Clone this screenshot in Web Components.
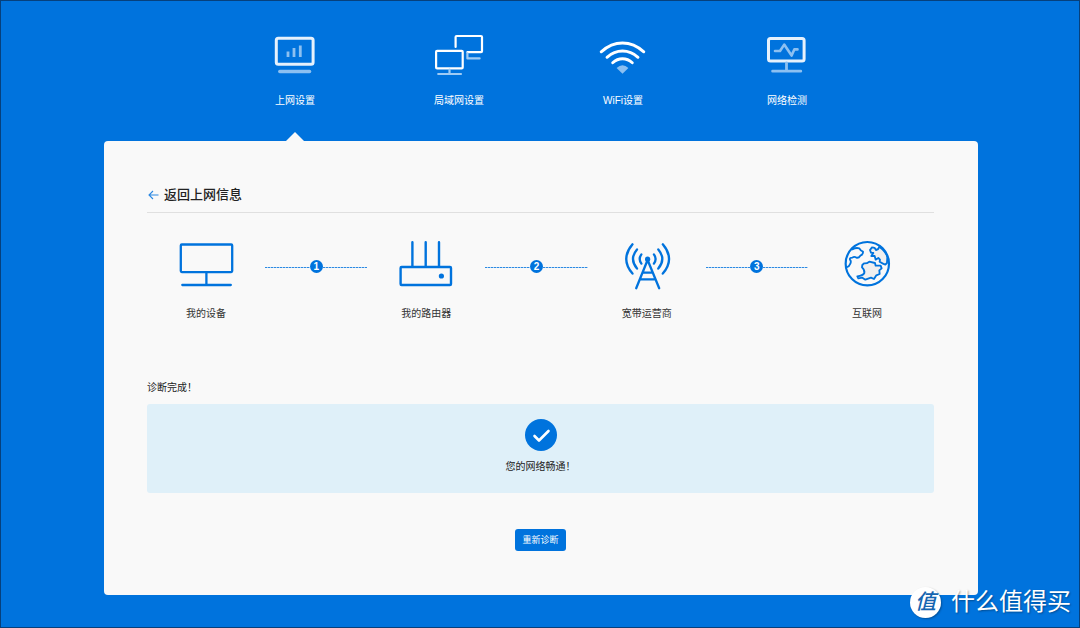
<!DOCTYPE html>
<html lang="zh-CN">
<head>
<meta charset="utf-8">
<meta name="viewport" content="width=device-width, initial-scale=1">
<title>上网设置</title>
<style>
  :root { --blue: #0073dd; --panel: #f9f9f9; --tint: #dff0f9; --ink: #333; }
  body { margin: 0; font: 10px/16px "Liberation Sans", "Noto Sans CJK SC", sans-serif; color: var(--ink); }
</style>
</head>
<body>
<router-page>
  <nav-tab slot="tab" icon="internet" active>上网设置</nav-tab>
  <nav-tab slot="tab" icon="lan">局域网设置</nav-tab>
  <nav-tab slot="tab" icon="wifi">WiFi设置</nav-tab>
  <nav-tab slot="tab" icon="check">网络检测</nav-tab>

  <back-title>返回上网信息</back-title>
  <diagnose-path>
    <path-node icon="device">我的设备</path-node>
    <path-link>1</path-link>
    <path-node icon="router">我的路由器</path-node>
    <path-link>2</path-link>
    <path-node icon="tower">宽带运营商</path-node>
    <path-link>3</path-link>
    <path-node icon="globe">互联网</path-node>
  </diagnose-path>
  <diagnose-result>
    <span slot="status">诊断完成！</span>
    您的网络畅通！
  </diagnose-result>
  <action-button>重新诊断</action-button>

  <site-mark slot="mark">什么值得买</site-mark>
</router-page>

<script>
const ICONS = {
  internet: `<svg viewBox="265 32 60 48" fill="none" stroke="#e6f1fc" stroke-width="3" stroke-linecap="round">
    <rect x="276.3" y="38.3" width="36.8" height="26" rx="2"/>
    <path d="M279.8 71.5H309.6" stroke="#8cc0f1" stroke-width="3.4"/>
    <path d="M288 51.5V57M294 48V57M300.3 45.5V57" stroke="#8cc0f1" stroke-width="2.8" stroke-linecap="butt"/></svg>`,
  lan: `<svg viewBox="429 32 60 48" fill="none" stroke="#fff" stroke-width="2.2" stroke-linecap="round" stroke-linejoin="round">
    <rect x="436.1" y="50.8" width="26.6" height="17.6" rx="1"/>
    <path d="M455.6 47V37q0-1 1-1H481q1 0 1 1V51.2q0 1-1 1H467.4"/>
    <path d="M467.4 53.4V58.4H479.6M449.5 69.6V73.5M438.2 74H461" stroke="#9fcbf4"/></svg>`,
  wifi: `<svg viewBox="593 32 60 48" fill="none" stroke="#fff" stroke-width="2.9" stroke-linecap="round">
    <path d="M601.2 51.8Q611 43 622.5 43T643.8 51.8M607 57.3Q614 51 622.5 51T638 57.3M612.7 62.8Q617 58.8 622.5 58.8T632.3 62.8"/>
    <path d="M616.6 68Q622.5 62.6 628.4 68L622.5 73.8Z" fill="#8cc0f1" stroke="none"/></svg>`,
  check: `<svg viewBox="757 32 60 48" fill="none" stroke="#e6f1fc" stroke-width="3" stroke-linecap="round" stroke-linejoin="round">
    <rect x="768.5" y="38.5" width="35.6" height="22.6" rx="2"/>
    <path d="M775 51H780L784.2 44.6L791.6 55.6L794.3 49.4H797.5" stroke="#8cc0f1" stroke-width="2.6"/>
    <path d="M786.5 63V70M772.6 71.2H800.8" stroke="#8cc0f1" stroke-width="2.8"/></svg>`,
  device: `<svg viewBox="176 239 60 52" fill="none" stroke="#0073dd" stroke-width="2.3" stroke-linecap="round">
    <rect x="180.8" y="244.5" width="51.4" height="27.6" rx="1"/><path d="M206.4 273V285M182.3 285H230.8"/></svg>`,
  router: `<svg viewBox="397 239 60 52" fill="none" stroke="#0073dd" stroke-width="2.4" stroke-linecap="round">
    <rect x="401.6" y="267" width="50.4" height="18" rx="1"/><path d="M413.4 242.3V266M426.7 242.3V266M440 242.3V266"/>
    <circle cx="442.4" cy="276" r="2.6" fill="#0073dd" stroke="none"/></svg>`,
  tower: `<svg viewBox="617 239 60 52" fill="none" stroke="#0073dd" stroke-width="2.3" stroke-linecap="round">
    <circle cx="647.6" cy="259.2" r="2.6" fill="#0073dd" stroke="none"/>
    <path d="M647.6 260L636.2 288.3M647.6 260L659.2 288.3M643 272.7H652.5M640 279.3H655.2"/>
    <path d="M632.5 244.3Q620 259 632.5 273.6M637 249.4Q629 259 637 268.6M641.4 254.4Q638 259 641.4 263.6"/>
    <path d="M662.8 244.3Q675.3 259 662.8 273.6M658.3 249.4Q666.3 259 658.3 268.6M653.9 254.4Q657.3 259 653.9 263.6"/></svg>`,
  globe: `<svg viewBox="837 239 60 52"><g transform="translate(760 225) scale(.3333)" fill="none" stroke="#0073dd" stroke-width="6.5" stroke-linecap="round" stroke-linejoin="round">
    <path d="M277 73Q288 67 298 70Q302 78 309 80Q310 89 301 92Q296 100 289 98Q283 93 277 98Q268 98 270 104Q275 110 270 118Q268 124 262 126" stroke-width="5.5"/>
    <path d="M358 65Q356 73 348 75Q346 67 336 67L330 75L333 83L340 84L334 93L344 93L347 104L355 99L360 104L359 110Q370 117 376 119L381 114L382 96Q378 80 358 65Z" fill="#efefef" stroke-width="5.5"/>
    <path d="M312 115Q320 116 328 110L345 114L347 122L362 122L365 130L358 136L359 147L349 151L342 162L333 158L316 164L307 158L295 160L292 154Q309 152 313 144Q315 135 306 127L307 120Z" fill="#efefef" stroke-width="5.5"/>
    <circle cx="322" cy="116" r="65"/></g></svg>`
};

function define(name, html, setup) {
  const template = document.createElement('template');
  template.innerHTML = html;
  customElements.define(name, class extends HTMLElement {
    constructor() {
      super();
      this.attachShadow({ mode: 'open' }).append(template.content.cloneNode(true));
    }
    connectedCallback() { if (setup) setup(this, this.shadowRoot); }
  });
}
const putIcon = (host, root) => {
  root.querySelector('.icon').innerHTML = ICONS[host.getAttribute('icon')];
};

define('router-page', `
  <style>
    :host { display: flex; flex-direction: column; position: relative; box-sizing: border-box; min-height: 100vh;
      padding: 0 32px 32px; background: var(--blue); border: 1px solid #06407c; }
    nav { display: flex; justify-content: center; padding: 31px 0 0 2px; }
    main { box-sizing: border-box; width: 100%; max-width: 874px; margin: 0 auto; flex: 1;
      padding: 44px 44px 40px 43px; background: var(--panel); border-radius: 4px; }
    .center { padding-left: 2px; display: flex; flex: 1; }
  </style>
  <nav aria-label="设置"><slot name="tab"></slot></nav>
  <div class="center"><main><slot></slot></main></div>
  <slot name="mark"></slot>`);

define('nav-tab', `
  <style>
    :host { display: block; flex: 0 1 164px; height: 109px; }
    a { display: flex; flex-direction: column; align-items: center; height: 100%; color: #fff; text-decoration: none; white-space: nowrap; }
    .icon { display: block; height: 48px; margin-bottom: 13px; }
    svg { display: block; width: 60px; height: 48px; }
    .arrow { display: none; margin-top: auto; width: 18px; height: 9px; background: var(--panel); clip-path: polygon(50% 0, 100% 100%, 0 100%); }
    :host([active]) .arrow { display: block; }
  </style>
  <a href="#"><span class="icon"></span><slot></slot><span class="arrow"></span></a>`, putIcon);

define('back-title', `
  <style>
    :host { display: block; border-bottom: 1px solid #e0e0e0; padding-bottom: 7px; }
    h1 { margin: 0; font-size: 13px; line-height: 20px; font-weight: 500; color: #222; }
    a { display: flex; align-items: center; gap: 5px; color: inherit; text-decoration: none; }
    svg { width: 12px; height: 12px; }
  </style>
  <h1><a href="#"><svg viewBox="0 0 12 12" fill="none" stroke="#2b88e2" stroke-width="1.1"><path d="M2 6H11.5M6 2L2 6L6 10"/></svg><slot></slot></a></h1>`);

define('diagnose-path', `
  <style>:host { display: flex; align-items: flex-start; padding-top: 26px; }</style><slot></slot>`);

define('path-node', `
  <style>
    :host { display: flex; flex-direction: column; align-items: center; flex: 0 0 15%; white-space: nowrap; }
    .icon { height: 52px; margin-bottom: 15px; }
    svg { display: block; width: 60px; height: 52px; }
  </style>
  <span class="icon"></span><slot></slot>`, putIcon);

define('path-link', `
  <style>
    :host { display: flex; align-items: center; flex: 0 0 13%; height: 54px; }
    i { flex: 1; height: 1px; margin-top: 2px; background: repeating-linear-gradient(90deg, #2d8ae2 0 2px, #a9cff2 2px 3px); }
    b { width: 13px; height: 13px; border-radius: 50%; background: var(--blue); color: #fff; line-height: 13px; text-align: center; }
  </style>
  <i></i><b><slot></slot></b><i></i>`);

define('diagnose-result', `
  <style>
    :host { display: block; padding-top: 58px; color: #222; }
    p { margin: 0; }
    .box { display: flex; flex-direction: column; align-items: center; gap: 8px; margin-top: 8px; padding: 15px 0 18px; border-radius: 3px; background: var(--tint); }
    svg { width: 32px; height: 32px; }
  </style>
  <p><slot name="status"></slot></p>
  <div class="box">
    <svg viewBox="0 0 32 32"><circle cx="16" cy="16" r="16" fill="#0073dd"/><path d="M9.5 17L14 21.5L23.5 12" fill="none" stroke="#fff" stroke-width="2.6" stroke-linecap="round" stroke-linejoin="round"/></svg>
    <p><slot></slot></p>
  </div>`);

define('action-button', `
  <style>
    :host { display: flex; justify-content: center; padding-top: 36px; }
    button { font: inherit; font-size: 9px; line-height: 14px; padding: 4px 7px; border: 0; border-radius: 3px; background: var(--blue); color: #fff; }
  </style>
  <button type="button"><slot></slot></button>`);

define('site-mark', `
  <style>
    :host { position: absolute; right: 8px; bottom: 7px; display: flex; align-items: center; gap: 10px;
      font-size: 24px; line-height: 36px; color: #fff; text-shadow: 1px 1px 2px rgba(0,0,0,.35); }
    b { width: 31px; height: 31px; border-radius: 50%; background: #fff; color: #1565b0; font-size: 21px; line-height: 30px;
      text-align: center; font-style: italic; font-weight: 500; text-shadow: none; box-shadow: 1px 1px 2px rgba(0,0,0,.3); }
  </style>
  <b>值</b><span><slot></slot></span>`);
</script>
</body>
</html>
